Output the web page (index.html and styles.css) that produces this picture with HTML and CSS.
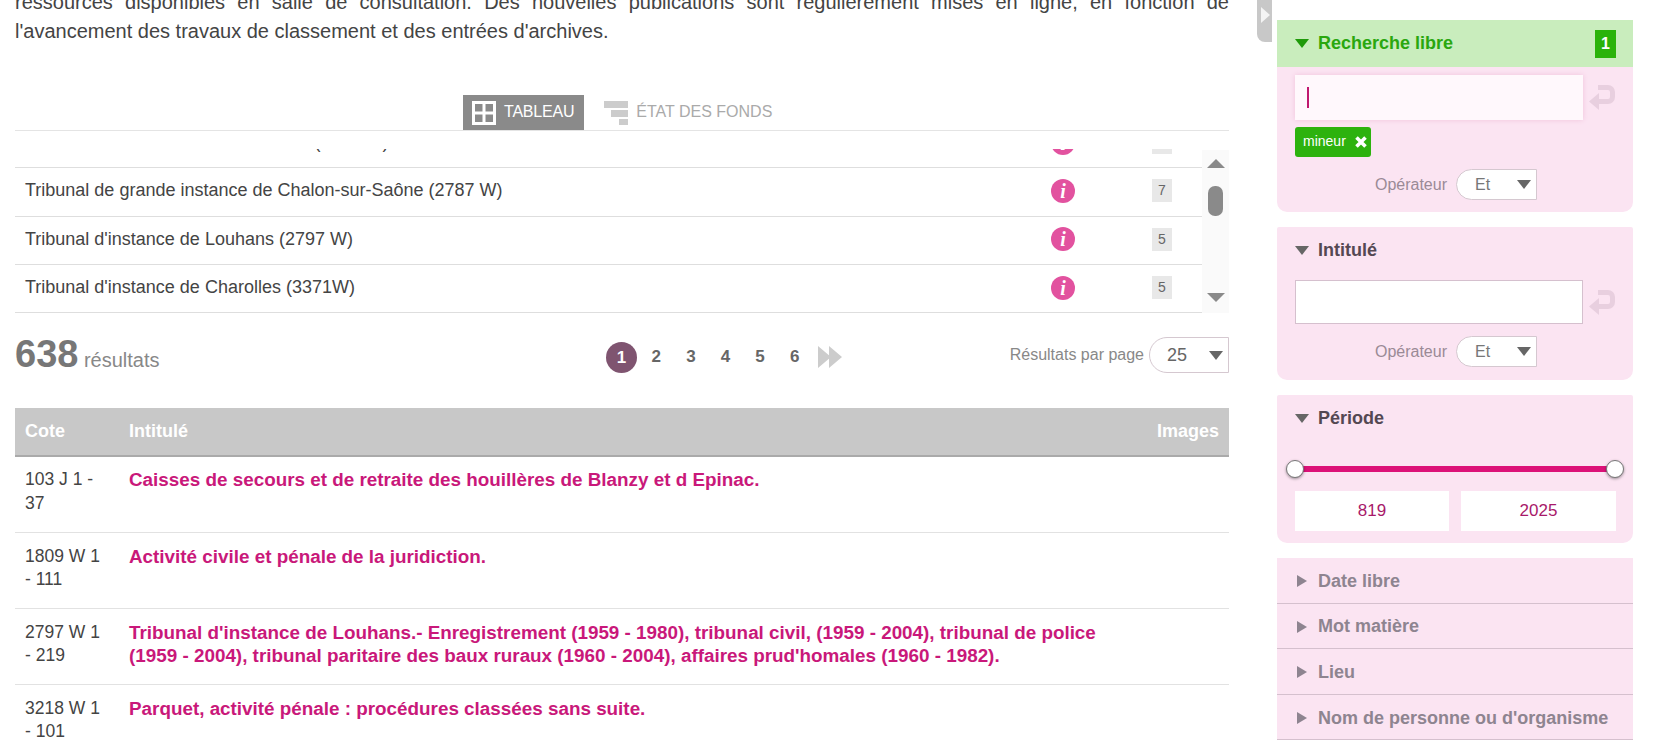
FILE: index.html
```html
<!DOCTYPE html>
<html lang="fr">
<head>
    <meta charset="UTF-8">
    <title>Archives - Recherche</title>
    <link rel="stylesheet" href="styles.css">
</head>
<body>
    <div class="page">
        <main class="main">
            <p class="intro"><span class="intro-line">ressources disponibles en salle de consultation. Des nouvelles publications sont régulièrement mises en ligne, en fonction de</span> l'avancement des travaux de classement et des entrées d'archives.</p>

            <div class="tabs">
                <a class="tab tab-active">
                    <svg class="tab-icon" viewBox="0 0 24 24"><path d="M1.5 1.5h21v21h-21zM12 1.5v21M1.5 12h21" fill="none" stroke="#fff" stroke-width="3"/></svg>
                    <span class="tab-label">TABLEAU</span>
                </a>
                <a class="tab">
                    <svg class="tab-icon" viewBox="0 0 24 24"><path d="M0 0h24v7H0zM7 9h17v7H7zM15 18h9v6h-9z" fill="#ccc"/></svg>
                    <span class="tab-label">ÉTAT DES FONDS</span>
                </a>
            </div>

            <div class="fonds">
                <div class="fonds-view">
                    <div class="fonds-list">
                        <div class="fonds-row">
                            <span class="fonds-name">Tribunal de commerce de Charolles (1809 W)</span>
                            <span class="info">i</span>
                            <span class="count">9</span>
                        </div>
                        <div class="fonds-row">
                            <span class="fonds-name">Tribunal de grande instance de Chalon-sur-Saône (2787 W)</span>
                            <span class="info">i</span>
                            <span class="count">7</span>
                        </div>
                        <div class="fonds-row">
                            <span class="fonds-name">Tribunal d'instance de Louhans (2797 W)</span>
                            <span class="info">i</span>
                            <span class="count">5</span>
                        </div>
                        <div class="fonds-row">
                            <span class="fonds-name">Tribunal d'instance de Charolles (3371W)</span>
                            <span class="info">i</span>
                            <span class="count">5</span>
                        </div>
                    </div>
                </div>
                <div class="scrollbar">
                    <span class="scroll-up"></span>
                    <span class="scroll-thumb"></span>
                    <span class="scroll-down"></span>
                </div>
            </div>

            <div class="results-bar">
                <div class="results-total"><strong>638</strong> résultats</div>
                <div class="pager">
                    <span class="page-num page-current">1</span>
                    <span class="page-num">2</span>
                    <span class="page-num">3</span>
                    <span class="page-num">4</span>
                    <span class="page-num">5</span>
                    <span class="page-num">6</span>
                    <svg class="page-next" viewBox="0 0 24 24"><path d="M0 1l13 11L0 23zM11 1l13 11-13 11z" fill="#ccc"/></svg>
                </div>
                <div class="per-page">
                    Résultats par page
                    <div class="select select-large"><span>25</span><i class="arrow-down"></i></div>
                </div>
            </div>

            <table class="results">
                <thead>
                    <tr>
                        <th class="col-cote">Cote</th>
                        <th>Intitulé</th>
                        <th class="col-images">Images</th>
                    </tr>
                </thead>
                <tbody>
                    <tr>
                        <td>103 J 1 - 37</td>
                        <td class="title">Caisses de secours et de retraite des houillères de Blanzy et d Epinac.</td>
                        <td></td>
                    </tr>
                    <tr>
                        <td>1809 W 1 - 111</td>
                        <td class="title">Activité civile et pénale de la juridiction.</td>
                        <td></td>
                    </tr>
                    <tr>
                        <td>2797 W 1 - 219</td>
                        <td class="title">Tribunal d'instance de Louhans.- Enregistrement (1959 - 1980), tribunal civil, (1959 - 2004), tribunal de police (1959 - 2004), tribunal paritaire des baux ruraux (1960 - 2004), affaires prud'homales (1960 - 1982).</td>
                        <td></td>
                    </tr>
                    <tr>
                        <td>3218 W 1 - 101</td>
                        <td class="title">Parquet, activité pénale : procédures classées sans suite.</td>
                        <td></td>
                    </tr>
                </tbody>
            </table>
        </main>

        <div class="side-toggle"><i class="toggle-arrow"></i></div>

        <aside class="sidebar">
            <section class="panel panel-active">
                <h3 class="panel-head">
                    <i class="arrow-down arrow-green"></i>Recherche libre
                    <span class="panel-badge">1</span>
                </h3>
                <div class="panel-body">
                    <div class="field">
                        <div class="input input-focus"><span class="caret"></span></div>
                        <svg class="enter" viewBox="0 0 26 25"><path d="M9 2.5h10a4.5 4.5 0 0 1 4.5 4.5v5a4.5 4.5 0 0 1-4.5 4.5H8" fill="none" stroke="#e8cfdf" stroke-width="5"/><path d="M10 8v17L0 16.5z" fill="#e8cfdf"/></svg>
                    </div>
                    <div class="tag">mineur
                        <svg class="tag-x" viewBox="0 0 12 12"><path d="M1.5 1.5l9 9M10.5 1.5l-9 9" stroke="#fff" stroke-width="3.6"/></svg>
                    </div>
                    <div class="operator">Opérateur <div class="select"><span>Et</span><i class="arrow-down"></i></div></div>
                </div>
            </section>

            <section class="panel">
                <h3 class="panel-title"><i class="arrow-down"></i>Intitulé</h3>
                <div class="panel-body">
                    <div class="field">
                        <div class="input"></div>
                        <svg class="enter" viewBox="0 0 26 25"><path d="M9 2.5h10a4.5 4.5 0 0 1 4.5 4.5v5a4.5 4.5 0 0 1-4.5 4.5H8" fill="none" stroke="#e8cfdf" stroke-width="5"/><path d="M10 8v17L0 16.5z" fill="#e8cfdf"/></svg>
                    </div>
                    <div class="operator operator-tight">Opérateur <div class="select"><span>Et</span><i class="arrow-down"></i></div></div>
                </div>
            </section>

            <section class="panel">
                <h3 class="panel-title"><i class="arrow-down"></i>Période</h3>
                <div class="panel-body panel-body-flush">
                    <div class="slider">
                        <span class="handle handle-min"></span>
                        <span class="handle handle-max"></span>
                    </div>
                    <div class="period">
                        <div class="period-box">819</div>
                        <div class="period-box">2025</div>
                    </div>
                </div>
            </section>

            <ul class="closed-list">
                <li><i class="arrow-right"></i>Date libre</li>
                <li><i class="arrow-right"></i>Mot matière</li>
                <li><i class="arrow-right"></i>Lieu</li>
                <li><i class="arrow-right"></i>Nom de personne ou d'organisme</li>
            </ul>
        </aside>
    </div>
</body>
</html>
```

FILE: styles.css
```css
* {
    margin: 0;
    padding: 0;
    box-sizing: border-box;
}

html, body {
    height: 100%;
    overflow: hidden;
}

body {
    font-family: "Liberation Sans", Arial, sans-serif;
    color: #444;
    background: #fff;
}

.page {
    display: flex;
    align-items: flex-start;
    padding-left: 15px;
}

.main {
    width: 1214px;
    flex: none;
}

.intro {
    margin-top: -12px;
    font-size: 20px;
    line-height: 29px;
}

.intro-line {
    display: block;
    text-align: justify;
    text-align-last: justify;
}

/* onglets */
.tabs {
    display: flex;
    margin-top: 49px;
    padding-left: 448px;
    height: 36px;
    border-bottom: 1px solid #e4e4e4;
}

.tab {
    display: flex;
    align-items: center;
    gap: 8px;
    height: 35px;
    padding: 0 10px 0 9px;
    margin-right: 11px;
    font-size: 16px;
    color: #aaa;
}

.tab-label {
    margin-top: -2px;
}

.tab-active {
    background: #8a8a8a;
    color: #fff;
    letter-spacing: -0.2px;
}

.tab-icon {
    width: 24px;
    height: 24px;
}

/* liste des fonds */
.fonds {
    display: flex;
    align-items: flex-end;
    height: 182px;
}

.fonds-view {
    flex: 1;
    height: 164px;
    overflow: hidden;
}

.fonds-list {
    margin-top: -29px;
}

.fonds-row {
    display: flex;
    align-items: center;
    height: 48.33px;
    padding: 0 0 2px 10px;
    border-bottom: 1px solid #dedede;
    font-size: 18px;
}

.fonds-name {
    width: 1026px;
}

.info {
    width: 24px;
    height: 24px;
    border-radius: 50%;
    background: #e2529f;
    color: #fff;
    font-family: "Liberation Serif", serif;
    font-style: italic;
    font-weight: bold;
    font-size: 20px;
    line-height: 24px;
    text-align: center;
}

.count {
    width: 20px;
    height: 23px;
    margin-left: 77px;
    background: #e8e8e8;
    color: #666;
    font-size: 14px;
    line-height: 23px;
    text-align: center;
}

.scrollbar {
    position: relative;
    width: 27px;
    height: 163px;
    background: #fafafa;
}

.scroll-up,
.scroll-down {
    position: absolute;
    left: 5px;
    border-left: 9px solid transparent;
    border-right: 9px solid transparent;
}

.scroll-up {
    top: 9px;
    border-bottom: 9px solid #8a8a8a;
}

.scroll-down {
    bottom: 11px;
    border-top: 9px solid #8a8a8a;
}

.scroll-thumb {
    position: absolute;
    top: 36px;
    left: 6px;
    width: 15px;
    height: 30px;
    border-radius: 7px;
    background: #8a8a8a;
}

/* barre de résultats */
.results-bar {
    display: grid;
    grid-template-columns: 591px auto 1fr;
    grid-template-rows: 36px;
    align-items: center;
    margin-top: 24px;
}

.results-total {
    margin-top: 4px;
    font-size: 20px;
    line-height: 36px;
    color: #888;
}

.results-total strong {
    font-size: 38px;
    color: #777;
}

.pager {
    display: flex;
    align-items: center;
    margin-top: 4px;
}

.page-num {
    width: 34.6px;
    font-size: 17px;
    font-weight: bold;
    color: #666;
    text-align: center;
}

.page-current {
    width: 31px;
    height: 31px;
    margin-right: 2px;
    border-radius: 50%;
    background: #7f5470;
    color: #fff;
    line-height: 31px;
}

.page-next {
    width: 24px;
    height: 24px;
    margin-left: 6px;
}

.per-page {
    display: flex;
    align-items: center;
    justify-content: flex-end;
    gap: 5px;
    font-size: 16px;
    color: #888;
}

.select {
    display: flex;
    align-items: center;
    justify-content: space-between;
    width: 81px;
    height: 31px;
    padding: 0 5px 0 18px;
    border: 1px solid #d5c8d0;
    border-radius: 18px 0 0 18px;
    background: #fff;
    font-size: 16px;
    color: #777;
}

.select-large {
    width: 80px;
    height: 36px;
    padding-left: 17px;
    font-size: 18px;
    color: #666;
}

.arrow-down {
    display: inline-block;
    border-left: 7px solid transparent;
    border-right: 7px solid transparent;
    border-top: 9px solid #666;
}

.arrow-right {
    display: inline-block;
    border-top: 6px solid transparent;
    border-bottom: 6px solid transparent;
    border-left: 10px solid #8e8490;
}

/* tableau */
.results {
    width: 100%;
    margin-top: 35px;
    border-collapse: collapse;
    table-layout: fixed;
    font-size: 17.5px;
    line-height: 23.5px;
}

.results th {
    height: 48px;
    padding: 1px 10px 0;
    background: #c8c8c8;
    border-bottom: 2px solid #aaa;
    color: #fff;
    font-size: 18px;
    text-align: left;
}

.results .col-cote {
    width: 100px;
}

.results .col-images {
    width: 115px;
    text-align: right;
}

.results td {
    height: 76px;
    padding: 12px 10px 0 10px;
    border-bottom: 1px solid #e2e2e2;
    vertical-align: top;
}

.results tbody tr:first-child td {
    padding-top: 11px;
}

.results td.title {
    padding-left: 14px;
    padding-right: 0;
    color: #c9187a;
    font-size: 18.85px;
    font-weight: bold;
}

.results th:nth-child(2) {
    padding-left: 14px;
}

/* poignée du panneau */
.side-toggle {
    display: flex;
    align-items: center;
    width: 15px;
    height: 42px;
    margin-left: 28px;
    padding: 0 0 12px 4px;
    border-radius: 0 0 0 8px;
    background: #c8c8c8;
}

.toggle-arrow {
    display: block;
    border-top: 8px solid transparent;
    border-bottom: 8px solid transparent;
    border-left: 9px solid #f4f4f4;
}

/* panneau de droite */
.sidebar {
    width: 356px;
    flex: none;
    margin-left: 5px;
    padding-top: 20px;
}

.panel {
    margin-bottom: 15px;
    border-radius: 2px 2px 10px 10px;
    background: #fbe4f2;
}

.panel-head {
    display: flex;
    align-items: center;
    height: 47px;
    padding: 0 18px;
    background: #c9edbd;
    color: #2aa70f;
    font-size: 18px;
}

.panel-title {
    display: flex;
    align-items: center;
    height: 46px;
    padding: 0 18px;
    color: #544853;
    font-size: 18px;
}

.panel-head .arrow-down,
.panel-title .arrow-down {
    margin-right: 9px;
}

.arrow-green {
    border-top-color: #1f9a0a;
}

.panel-badge {
    width: 21px;
    height: 28px;
    margin-left: auto;
    margin-right: -1px;
    background: #2ab30a;
    color: #fff;
    font-size: 16px;
    line-height: 28px;
    text-align: center;
}

.panel-body {
    padding: 7px 18px 12px;
}

.panel-active .panel-body {
    padding-top: 8px;
}

.panel-body-flush {
    padding-top: 0;
}

.field {
    display: flex;
    align-items: center;
    gap: 6px;
}

.input {
    display: flex;
    align-items: center;
    width: 288px;
    height: 44px;
    padding-left: 12px;
    border: 1px solid #d5c0ce;
    background: #fff;
}

.input-focus {
    height: 45px;
    border: 0;
    background: #fff8fc;
    box-shadow: 0 0 5px #f0c4dc;
}

.caret {
    width: 2px;
    height: 21px;
    background: #c0186f;
}

.enter {
    width: 26px;
    height: 25px;
}

.tag {
    display: inline-flex;
    align-items: center;
    gap: 9px;
    width: 76px;
    height: 30px;
    margin-top: 7px;
    padding: 0 0 2px 8px;
    border-radius: 3px;
    background: #2db20e;
    color: #fff;
    font-size: 14px;
}

.tag-x {
    width: 12px;
    height: 12px;
    margin-top: 2px;
}

.operator {
    display: flex;
    align-items: center;
    justify-content: flex-end;
    gap: 9px;
    width: 242px;
    margin-top: 12px;
    font-size: 16px;
    color: #9a8a96;
}

.operator-tight {
    margin-bottom: 1px;
}

.slider {
    position: relative;
    height: 6px;
    margin-top: 25px;
    margin-right: -3px;
    background: #dc1178;
}

.handle {
    position: absolute;
    top: -6px;
    width: 18px;
    height: 18px;
    border-radius: 50%;
    border: 1px solid #777;
    background: #fff;
    box-shadow: 0 1px 3px rgba(0, 0, 0, 0.4);
}

.handle-min {
    left: -9px;
}

.handle-max {
    right: -6px;
}

.period {
    display: flex;
    gap: 12px;
    margin-top: 19px;
}

.period-box {
    flex: 0 0 154px;
    height: 40px;
    background: #fff;
    color: #a8196a;
    font-size: 17px;
    line-height: 40px;
    text-align: center;
}

.period-box + .period-box {
    flex-basis: 155px;
}

.closed-list {
    list-style: none;
    background: #fbe4f2;
}

.closed-list li {
    display: flex;
    align-items: center;
    gap: 11px;
    height: 45.6px;
    padding: 2px 0 0 20px;
    border-bottom: 1px solid #d5c0ce;
    color: #8e8490;
    font-size: 18px;
    font-weight: bold;
}
```
